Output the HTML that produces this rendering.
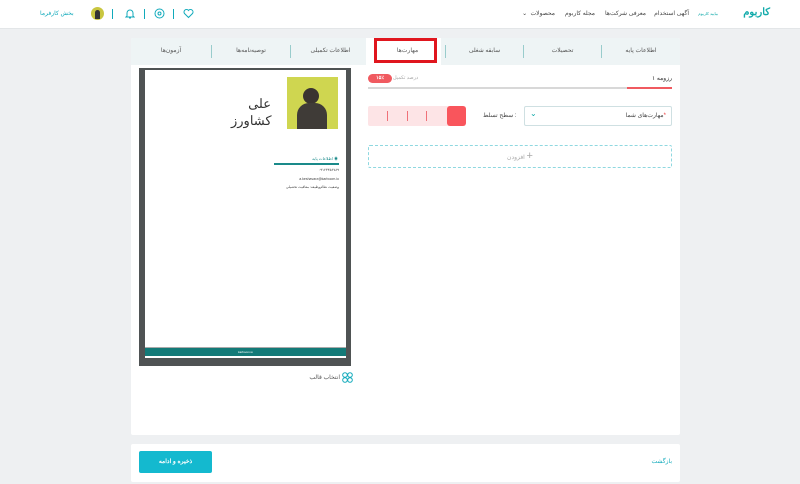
<!DOCTYPE html>
<html><head><meta charset="utf-8"><style>
*{box-sizing:border-box;margin:0;padding:0}
body{width:800px;height:484px;background:#eef0f2;font-family:"Liberation Sans","Noto Sans CJK SC",sans-serif;position:relative;overflow:hidden;font-size:6px;color:#555}
.abs{position:absolute}
.hdr{left:0;top:0;width:800px;height:29px;background:#fff;border-bottom:1px solid #e3e6e8}
.card{background:#fff;border-radius:2px}
.tab{position:absolute;top:0;height:27px;line-height:27px;font-size:6px;color:#555;text-align:center}
.sep{position:absolute;top:7px;width:1px;height:13px;background:#9cc}
</style></head><body>
<div class="abs hdr">
 <div class="abs" style="right:30px;top:7px;font-size:10px;font-weight:bold;color:#1aa">کاربوم</div>
 <div class="abs" style="right:82px;top:11px;font-size:4px;color:#1aa">بیایید کاربوم</div>
 <div class="abs" style="right:111px;top:10px;font-size:6px;color:#444">آگهی استخدام</div>
 <div class="abs" style="right:154px;top:10px;font-size:6px;color:#444">معرفی شرکت‌ها</div>
 <div class="abs" style="right:205px;top:10px;font-size:6px;color:#444">مجله کاربوم</div>
 <div class="abs" style="right:245px;top:10px;font-size:6px;color:#444">⌄ &nbsp;محصولات</div>
 <div class="abs" style="left:40px;top:10px;font-size:6px;color:#1ab">بخش کارفرما</div>
 <div class="abs" style="left:91px;top:7px;width:13px;height:13px;border-radius:50%;background:#c9c640"><div style="margin:3px auto 0;width:5px;height:9px;background:#333;border-radius:3px 3px 0 0"></div></div>
 <div class="abs" style="left:112px;top:9px;width:1px;height:10px;background:#1ab"></div>
 <svg class="abs" style="left:125px;top:8px" width="10" height="11" viewBox="0 0 10 11"><path d="M2 8V5a3 3 0 016 0v3l1 1H1zM4 10h2" fill="none" stroke="#1ab" stroke-width="1"/></svg>
 <div class="abs" style="left:144px;top:9px;width:1px;height:10px;background:#1ab"></div>
 <svg class="abs" style="left:154px;top:8px" width="11" height="11" viewBox="0 0 11 11"><circle cx="5.5" cy="5.5" r="4.5" fill="none" stroke="#1ab"/><circle cx="5.5" cy="5.5" r="1.5" fill="none" stroke="#1ab"/></svg>
 <div class="abs" style="left:173px;top:9px;width:1px;height:10px;background:#1ab"></div>
 <svg class="abs" style="left:183px;top:8px" width="11" height="11" viewBox="0 0 11 11"><path d="M5.5 9.5L1.5 5.5a2.3 2.3 0 014-3 2.3 2.3 0 014 3z" fill="none" stroke="#1ab"/></svg>
</div>

<div class="abs card" style="left:131px;top:38px;width:549px;height:397px;overflow:hidden">
 <div class="abs" style="left:0;top:0;width:549px;height:27px;background:#eef4f5"></div>
 <div class="abs" style="left:235px;top:0;width:75px;height:28px;background:#fff"></div>
 <div class="tab" style="right:0;width:78px">اطلاعات پایه</div>
 <div class="sep" style="right:78px"></div>
 <div class="tab" style="right:79px;width:77px">تحصیلات</div>
 <div class="sep" style="right:156px"></div>
 <div class="tab" style="right:157px;width:77px">سابقه شغلی</div>
 <div class="sep" style="right:234px"></div>
 <div class="tab" style="right:235px;width:75px">مهارت‌ها</div>
 <div class="abs" style="left:243px;top:0;width:63px;height:25px;border:3px solid #e0161e"></div>
 <div class="tab" style="right:310px;width:79px">اطلاعات تکمیلی</div>
 <div class="sep" style="right:389px"></div>
 <div class="tab" style="right:390px;width:78px">توصیه‌نامه‌ها</div>
 <div class="sep" style="right:468px"></div>
 <div class="tab" style="right:469px;width:80px">آزمون‌ها</div>

 <div class="abs" style="left:8px;top:30px;width:212px;height:298px;background:#4f5354"></div>
 <div class="abs" style="left:14px;top:32px;width:201px;height:288px;background:#fff"></div>
 <div class="abs" style="left:156px;top:39px;width:51px;height:52px;background:#cfd650"><div style="position:absolute;left:16px;top:11px;width:16px;height:16px;border-radius:50%;background:#3a3430"></div><div style="position:absolute;left:10px;top:26px;width:30px;height:26px;border-radius:12px 12px 0 0;background:#3f3b37"></div></div>
 <div class="abs" style="left:100px;top:57px;width:40px;text-align:right;font-size:13px;color:#333;line-height:17px">علی<br>کشاورز</div>
 <div class="abs" style="left:143px;top:118px;width:64px;text-align:right;font-size:4px;color:#1a8a8a">اطلاعات پایه ◉</div>
 <div class="abs" style="left:143px;top:125px;width:65px;height:1.5px;background:#1a8a8a"></div>
 <div class="abs" style="left:143px;top:130px;width:65px;text-align:right;font-size:3.5px;color:#444">۰۹۱۲۳۴۵۶۷۸۹</div>
 <div class="abs" style="left:143px;top:139px;width:65px;text-align:right;font-size:3.5px;color:#444">a.keshavarz@karboom.io</div>
 <div class="abs" style="left:143px;top:147px;width:65px;text-align:right;font-size:3.5px;color:#444">وضعیت نظام‌وظیفه: معافیت تحصیلی</div>
 <div class="abs" style="left:14px;top:309px;width:201px;height:9px;background:#137a78;border-top:1px solid #aaa;color:#fff;font-size:3px;text-align:center;line-height:8px">karboom.io</div>
 <div class="abs" style="left:172px;top:336px;width:37px;text-align:right;font-size:6px;color:#555">انتخاب قالب</div>
 <svg class="abs" style="left:211px;top:334px" width="11" height="11" viewBox="0 0 11 11"><g fill="none" stroke="#1ab"><circle cx="3" cy="3" r="2.3"/><circle cx="8" cy="3" r="2.3"/><circle cx="3" cy="8" r="2.3"/><circle cx="8" cy="8" r="2.3"/></g></svg>

 <div class="abs" style="right:8px;top:37px;font-size:6px;color:#333">رزومه ۱</div>
 <div class="abs" style="left:262px;top:37px;font-size:5px;color:#aaa">درصد تکمیل</div>
 <div class="abs" style="left:237px;top:36px;width:24px;height:9px;border-radius:5px;background:#f05a60;color:#fff;font-size:5px;font-weight:bold;text-align:center;line-height:9px">۱۵٪</div>
 <div class="abs" style="left:237px;top:49px;width:304px;height:2px;background:#d8d8d8"></div>
 <div class="abs" style="left:496px;top:49px;width:45px;height:2px;background:#f05a60"></div>
 <div class="abs" style="left:393px;top:68px;width:148px;height:20px;border:1px solid #cfe0e2;border-radius:2px"></div>
 <div class="abs" style="right:14px;top:74px;font-size:6px;color:#444">مهارت‌های شما<span style="color:#e33">*</span></div>
 <div class="abs" style="left:399px;top:71px;font-size:8px;color:#1aa">⌄</div>
 <div class="abs" style="left:352px;top:74px;font-size:6px;color:#444">سطح تسلط :</div>
 <div class="abs" style="left:237px;top:68px;width:98px;height:20px;background:#fde4e6;border-radius:2px"></div>
 <div class="abs" style="left:256px;top:73px;width:1px;height:10px;background:#f07078"></div>
 <div class="abs" style="left:276px;top:73px;width:1px;height:10px;background:#f07078"></div>
 <div class="abs" style="left:295px;top:73px;width:1px;height:10px;background:#f07078"></div>
 <div class="abs" style="left:316px;top:68px;width:19px;height:20px;background:#f9555c;border-radius:3px"></div>
 <div class="abs" style="left:237px;top:107px;width:304px;height:23px;border:1px dashed #8fd8e0;border-radius:2px;text-align:center;line-height:21px;font-size:6px;color:#aaa">افزودن <span style="font-size:11px;color:#aaa">+</span></div>
</div>

<div class="abs card" style="left:131px;top:444px;width:549px;height:38px">
 <div class="abs" style="left:8px;top:7px;width:73px;height:22px;background:#14b9cf;border-radius:2px;color:#fff;font-size:6px;text-align:center;line-height:22px;font-weight:bold">ذخیره و ادامه</div>
 <div class="abs" style="right:8px;top:14px;font-size:6px;color:#1ab">بازگشت</div>
</div>
</body></html>
